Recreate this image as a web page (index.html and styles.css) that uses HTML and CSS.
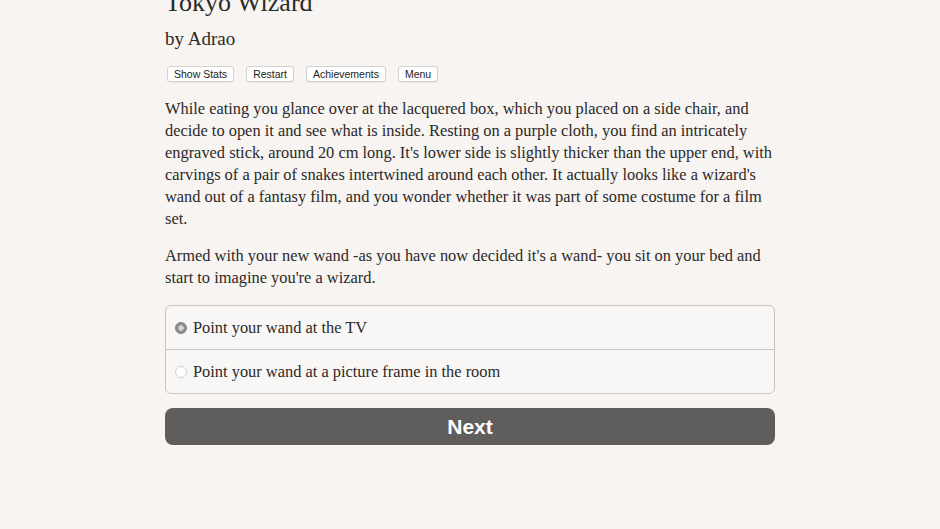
FILE: index.html
```
<!DOCTYPE html>
<html>
<head>
<meta charset="utf-8">
<link rel="stylesheet" href="styles.css">
</head>
<body>
<div class="container">
  <h1 class="title">Tokyo Wizard</h1>
  <div class="author">by Adrao</div>
  <div class="buttons">
    <button class="small-btn">Show Stats</button>
    <button class="small-btn">Restart</button>
    <button class="small-btn">Achievements</button>
    <button class="small-btn">Menu</button>
  </div>
  <p class="text">While eating you glance over at the lacquered box, which you placed on a side chair, and decide to open it and see what is inside. Resting on a purple cloth, you find an intricately engraved stick, around 20 cm long. It's lower side is slightly thicker than the upper end, with carvings of a pair of snakes intertwined around each other. It actually looks like a wizard's wand out of a fantasy film, and you wonder whether it was part of some costume for a film set.</p>
  <p class="text">Armed with your new wand -as you have now decided it's a wand- you sit on your bed and start to imagine you're a wizard.</p>
  <div class="choices">
    <div class="choice"><span class="radio radio-on"></span><span>Point your wand at the TV</span></div>
    <div class="choice"><span class="radio"></span><span>Point your wand at a picture frame in the room</span></div>
  </div>
  <button class="next">Next</button>
</div>
</body>
</html>
```
FILE: styles.css
```
html, body {
  margin: 0;
  padding: 0;
  background: #f7f4f1;
}
body {
  font-family: "Liberation Serif", serif;
  color: #2b2a29;
}
.container {
  width: 610px;
  margin: 0 auto;
}
.title {
  margin: -12px 0 0 0;
  font-size: 26px;
  line-height: 30px;
  font-weight: normal;
}
.author {
  margin-top: 10px;
  font-size: 19px;
  line-height: 22px;
}
.buttons {
  display: flex;
  gap: 12px;
  margin-top: 16px;
  padding-left: 2px;
}
.small-btn {
  font-family: "Liberation Sans", sans-serif;
  font-size: 10.5px;
  line-height: 14px;
  color: #222;
  background: #fff;
  border: 1px solid #d4d1ce;
  border-radius: 3px;
  padding: 0 6px;
  box-shadow: 0 1px 1px rgba(0,0,0,0.06);
}
.text {
  font-size: 16.4px;
  line-height: 22px;
  margin: 16px 0 0 0;
}
.text + .text {
  margin-top: 15px;
}
.choices {
  margin-top: 16px;
  border: 1px solid #c8c5c2;
  border-radius: 6px;
  background: #f9f7f5;
}
.choice {
  display: flex;
  align-items: center;
  height: 43px;
  padding-left: 9px;
  font-size: 16.4px;
}
.choice + .choice {
  border-top: 1px solid #cbc8c5;
}
.radio {
  width: 12px;
  height: 12px;
  border-radius: 50%;
  border: 1px solid #d2d0ce;
  background: #fff;
  margin-right: 6px;
  box-sizing: border-box;
}
.radio-on {
  background: radial-gradient(circle, #d6d6d6 0 2.5px, #8d8d8d 3px);
  border-color: #7f7f7f;
}
.next {
  display: block;
  width: 100%;
  margin-top: 14px;
  height: 37px;
  border: none;
  border-radius: 8px;
  background: #5f5e5d;
  color: #fff;
  font-family: "Liberation Sans", sans-serif;
  font-weight: bold;
  font-size: 21px;
  padding: 0;
}
```
